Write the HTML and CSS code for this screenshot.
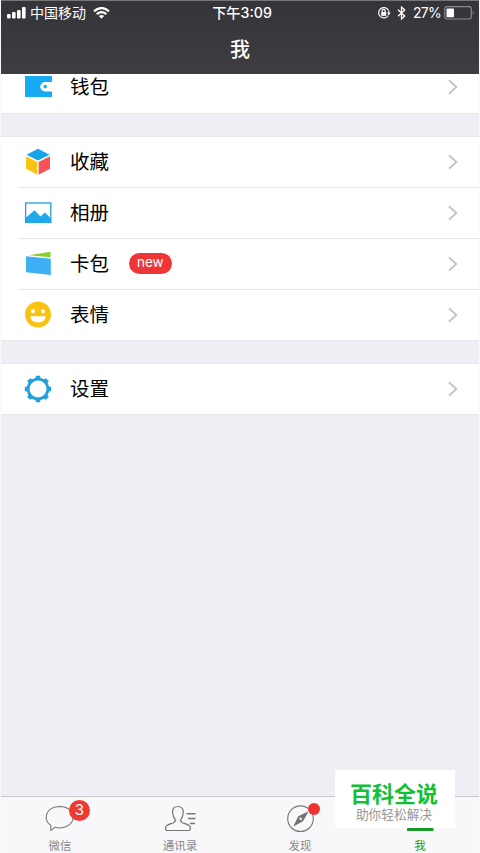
FILE: index.html
```html
<!DOCTYPE html>
<html lang="zh-CN">
<head>
<meta charset="utf-8">
<title>我</title>
<link rel="stylesheet" href="styles.css">
</head>
<body>
<div class="app">
  <header class="header">
    <div class="status">
      <div class="status-side">
        <svg class="signal" width="19" height="12" viewBox="0 0 19 12" fill="#fff"><rect x="0" y="7" width="3.6" height="4.5" rx="1"/><rect x="5" y="5" width="3.6" height="6.5" rx="1"/><rect x="10" y="3" width="3.6" height="8.5" rx="1"/><rect x="15" y="0" width="3.6" height="11.5" rx="1"/></svg>
        <span class="carrier">中国移动</span>
        <svg width="17" height="12" viewBox="0 0 17 12" fill="none" stroke="#fff" stroke-width="2.2"><path d="M1 4.3Q8.500-2.200 16 4.300M3.700 7.200Q8.500 3 13.300 7.200"/><path d="M8.500 11.700L5.900 9Q8.500 7 11.100 9Z" fill="#fff" stroke="none"/></svg>
      </div>
      <span class="clock">下午3:09</span>
      <div class="status-side status-right">
        <svg width="14" height="14" viewBox="0 0 14 14" fill="none" stroke="#fff" stroke-width="1.2"><path d="M11.300 9.500A5.200 5.200 0 1 1 11.400 4.200M11.800 4.500V8"/><path d="M10 6.800h3.700L11.800 9.200Z" fill="#fff" stroke="none"/><rect x="4.200" y="6" width="5" height="3.800" fill="#fff" stroke="none"/><path d="M5.200 6V4.800a1.500 1.500 0 0 1 3 0V6"/></svg>
        <svg class="bluetooth" width="9" height="14" viewBox="0 0 9 14" fill="none" stroke="#fff" stroke-width="1.300"><path d="M1 3.800L7.700 10L4.500 13V1L7.700 4L1 10.200"/></svg>
        <span class="percent">27%</span>
        <svg width="31" height="14" viewBox="0 0 31 14"><rect x=".7" y=".7" width="26.600" height="12.300" rx="2.500" fill="none" stroke="#8b8b8e" stroke-width="1.200"/><rect x="2.500" y="2.500" width="7.500" height="8.700" rx=".8" fill="#fff"/><path d="M28.700 4.800q2 2 0 4Z" fill="#8b8b8e"/></svg>
      </div>
    </div>
    <h1 class="title">我</h1>
  </header>

  <main class="content">
    <section class="group group-scrolled">
      <div class="row">
        <svg class="icon" viewBox="0 0 28 28"><path d="M1 3H28V9H21a4 4 0 0 0 0 9.500H28V24H1Z" fill="#17abf3"/><circle cx="21.200" cy="13.600" r="1.800" fill="#17abf3"/></svg>
        <span class="label">钱包</span>
        <svg class="chevron" viewBox="0 0 10 16"><path d="M1 1.300L8.300 8L1 14.700"/></svg>
      </div>
    </section>
    <section class="group">
      <div class="row">
        <svg class="icon" viewBox="0 0 28 28"><path d="M14 .8L25.500 6.800L14 12.600L2.500 6.800Z" fill="#16a5eb"/><path d="M2 8.300L13.300 14V26.800L2 20.800Z" fill="#f9c513"/><path d="M26 8.300L14.700 14V26.800L26 20.800Z" fill="#fa5057"/></svg>
        <span class="label">收藏</span>
        <svg class="chevron" viewBox="0 0 10 16"><path d="M1 1.300L8.300 8L1 14.700"/></svg>
      </div>
      <div class="row">
        <svg class="icon" viewBox="0 0 28 28"><rect x="1.600" y="4" width="25.200" height="19.300" fill="none" stroke="#239fda" stroke-width="1.300"/><path d="M2 18.500L10.500 11.300L16.500 17.500L20.800 13.500L27 19.500V23.500H2Z" fill="#20a8e8"/></svg>
        <span class="label">相册</span>
        <svg class="chevron" viewBox="0 0 10 16"><path d="M1 1.300L8.300 8L1 14.700"/></svg>
      </div>
      <div class="row">
        <svg class="icon" viewBox="0 0 28 28"><path d="M5 5.300L26.500 1.700V7.300Z" fill="#8ad025"/><path d="M2 6.300L26.800 8.700V25L2 22.300Z" fill="#3db0f4"/></svg>
        <span class="label">卡包</span>
        <span class="badge-new">new</span>
        <svg class="chevron" viewBox="0 0 10 16"><path d="M1 1.300L8.300 8L1 14.700"/></svg>
      </div>
      <div class="row">
        <svg class="icon" viewBox="0 0 28 28"><circle cx="14" cy="13.500" r="13" fill="#fac312"/><circle cx="9" cy="10.300" r="2" fill="#fff"/><circle cx="19" cy="10.300" r="2" fill="#fff"/><path d="M6.300 15.300H21.800Q21 21.500 14 21.500T6.300 15.300Z" fill="#fff"/></svg>
        <span class="label">表情</span>
        <svg class="chevron" viewBox="0 0 10 16"><path d="M1 1.300L8.300 8L1 14.700"/></svg>
      </div>
    </section>
    <section class="group">
      <div class="row">
        <svg class="icon" viewBox="0 0 28 28"><circle cx="14" cy="14" r="9.900" fill="none" stroke="#239fdb" stroke-width="2.800"/><g fill="#239fdb"><path id="tooth" d="M11.300 4L12 .8h4L16.700 4Z"/><use href="#tooth" transform="rotate(45 14 14)"/><use href="#tooth" transform="rotate(90 14 14)"/><use href="#tooth" transform="rotate(135 14 14)"/><use href="#tooth" transform="rotate(180 14 14)"/><use href="#tooth" transform="rotate(225 14 14)"/><use href="#tooth" transform="rotate(270 14 14)"/><use href="#tooth" transform="rotate(315 14 14)"/></g></svg>
        <span class="label">设置</span>
        <svg class="chevron" viewBox="0 0 10 16"><path d="M1 1.300L8.300 8L1 14.700"/></svg>
      </div>
    </section>
  </main>

  <nav class="tabs">
    <div class="tab">
      <div class="tab-icon">
        <svg width="34" height="30" viewBox="0 0 34 30" fill="none" stroke="#77777a" stroke-width="1.100"><path d="M7.800 22.500C-.5 16 2.500 3.800 17 3.500C34.500 4 35 23.500 17 25Q14 25 12 24.300L7.800 27.300Z"/></svg>
        <span class="badge-count">3</span>
      </div>
      <span class="tab-label">微信</span>
    </div>
    <div class="tab">
      <div class="tab-icon">
        <svg width="34" height="30" viewBox="0 0 34 30" fill="none" stroke="#77777a" stroke-width="1.200"><path d="M14.700 3.500C11 3.500 9.300 6 9.600 9.500Q10 14 12 16Q13 18.500 10.500 19.700C6 21.500 2.500 22 2.500 25Q2.500 27.500 4.500 27.500H25.500Q27.500 27.500 27.500 25C27.500 22 24 21.500 19.500 19.700Q17 18.500 18 16Q20 14 20.300 9.500C20.500 6 18.400 3.500 14.700 3.500Z"/><path d="M23.500 10.700H32.500M25 15.500H32.500M27 20.500H32" stroke-width="1.400"/></svg>
      </div>
      <span class="tab-label">通讯录</span>
    </div>
    <div class="tab">
      <div class="tab-icon">
        <svg width="34" height="30" viewBox="0 0 34 30"><circle cx="17.500" cy="15.700" r="12.800" fill="none" stroke="#77777a" stroke-width="1.100"/><path d="M25.700 8.200L20 18.300L10.300 23.500L15.300 13.300Z" fill="#717174"/><circle cx="17.700" cy="15.700" r="1.500" fill="#ddd"/></svg>
        <span class="badge-dot"></span>
      </div>
      <span class="tab-label">发现</span>
    </div>
    <div class="tab tab-active">
      <div class="tab-icon">
        <svg width="34" height="30" viewBox="0 0 34 30"><circle cx="17" cy="10" r="7" fill="#179b24"/><path d="M4 28V26Q5 22 14 19H20Q30 22 30.500 26V28Z" fill="#179b24"/></svg>
      </div>
      <span class="tab-label">我</span>
    </div>
  </nav>

  <aside class="watermark">
    <span class="watermark-title">百科全说</span>
    <span class="watermark-sub">助你轻松解决</span>
  </aside>
</div>
</body>
</html>
```
FILE: styles.css
```css
* {
  box-sizing: border-box;
}

body {
  margin: 0;
  font-family: "Liberation Sans", "Noto Sans CJK SC", sans-serif;
}

svg {
  display: block;
  flex: none;
}

.app {
  position: relative;
  display: flex;
  flex-direction: column;
  width: 480px;
  height: 853px;
  overflow: hidden;
  background: #efeef4;
  border-left: 1px solid #fafafc;
  border-right: 1px solid #fafafc;
}

.header {
  flex: none;
  height: 74px;
  margin: 0 -1px;
  background: linear-gradient(#353439, #3e3d42);
  border-top: 1px solid #77777a;
  color: #fff;
  z-index: 1;
}

.status {
  display: grid;
  grid-template-columns: 1fr auto 1fr;
  align-items: center;
  height: 24px;
  padding: 0 5px 0 7px;
  font-family: Inter, "Noto Sans CJK SC", sans-serif;
  font-size: 14px;
  line-height: 20px;
}

.status-side {
  display: flex;
  align-items: center;
}

.carrier {
  margin: 0 7px 0 4px;
}

.clock {
  padding-left: 2px;
  font-weight: 500;
  font-size: 14.200px;
}

.status-right {
  justify-content: flex-end;
}

.bluetooth {
  margin: 0 7px 0 6px;
}

.percent {
  margin-right: 3px;
  font-size: 14px;
  letter-spacing: -0.7px;
}

.title {
  margin: 10px 0 0;
  font-size: 20px;
  font-weight: 500;
  line-height: 30px;
  text-align: center;
}

.content {
  flex: 1;
  min-height: 0;
}

.group {
  margin-bottom: 24px;
  background: #fff;
  box-shadow: 0 0 0 1px #e8e7eb;
}

.group-scrolled {
  margin-top: -12.250px;
}

.row {
  display: flex;
  align-items: center;
  height: 50.750px;
  margin-left: 17px;
  padding: 0 21px 0 6px;
}

.group:last-child .row {
  height: 50px;
}

.row + .row {
  border-top: 1px solid #e8e8eb;
}

.icon {
  width: 28px;
  height: 28px;
}

.label {
  margin-left: 18px;
  color: #000;
  font-size: 19.500px;
  line-height: 30px;
}

.chevron {
  width: 10px;
  height: 16px;
  margin-left: auto;
  fill: none;
  stroke: #c5c5ca;
  stroke-width: 2;
}

.badge-new {
  height: 21px;
  margin-left: 20px;
  padding: 0 8px;
  border-radius: 11px;
  background: #ee3636;
  color: #fff;
  font-family: Inter, sans-serif;
  font-size: 13.500px;
  line-height: 19px;
}

.tabs {
  display: grid;
  grid-template-columns: repeat(4, 1fr);
  flex: none;
  height: 57px;
  margin: 0 -1px;
  background: #f8f8fa;
  border-top: 1px solid #c9c9ce;
}

.tab {
  display: flex;
  flex-direction: column;
  align-items: center;
  padding-top: 6px;
  color: #88888b;
}

.tab-icon {
  position: relative;
}

.tab-label {
  margin-top: 4px;
  font-size: 11.500px;
  line-height: 18px;
}

.tab-active {
  color: #1a9e27;
}

.badge-count {
  position: absolute;
  top: -3px;
  right: -13px;
  width: 21px;
  height: 21px;
  border-radius: 50%;
  background: #ef3a33;
  color: #fff;
  font-family: Inter, sans-serif;
  font-size: 15px;
  line-height: 20px;
  text-align: center;
}

.badge-dot {
  position: absolute;
  top: 0;
  right: -3px;
  width: 12px;
  height: 12px;
  border-radius: 50%;
  background: #ee3433;
}

.watermark {
  position: absolute;
  right: 24px;
  bottom: 25px;
  display: flex;
  flex-direction: column;
  align-items: center;
  width: 120px;
  height: 58px;
  padding: 10px 2px 0 0;
  background: #fff;
}

.watermark-title {
  color: #13bf35;
  font-size: 22px;
  font-weight: 700;
  line-height: 30px;
}

.watermark-sub {
  color: #969696;
  font-size: 12.700px;
  line-height: 10px;
}
```
